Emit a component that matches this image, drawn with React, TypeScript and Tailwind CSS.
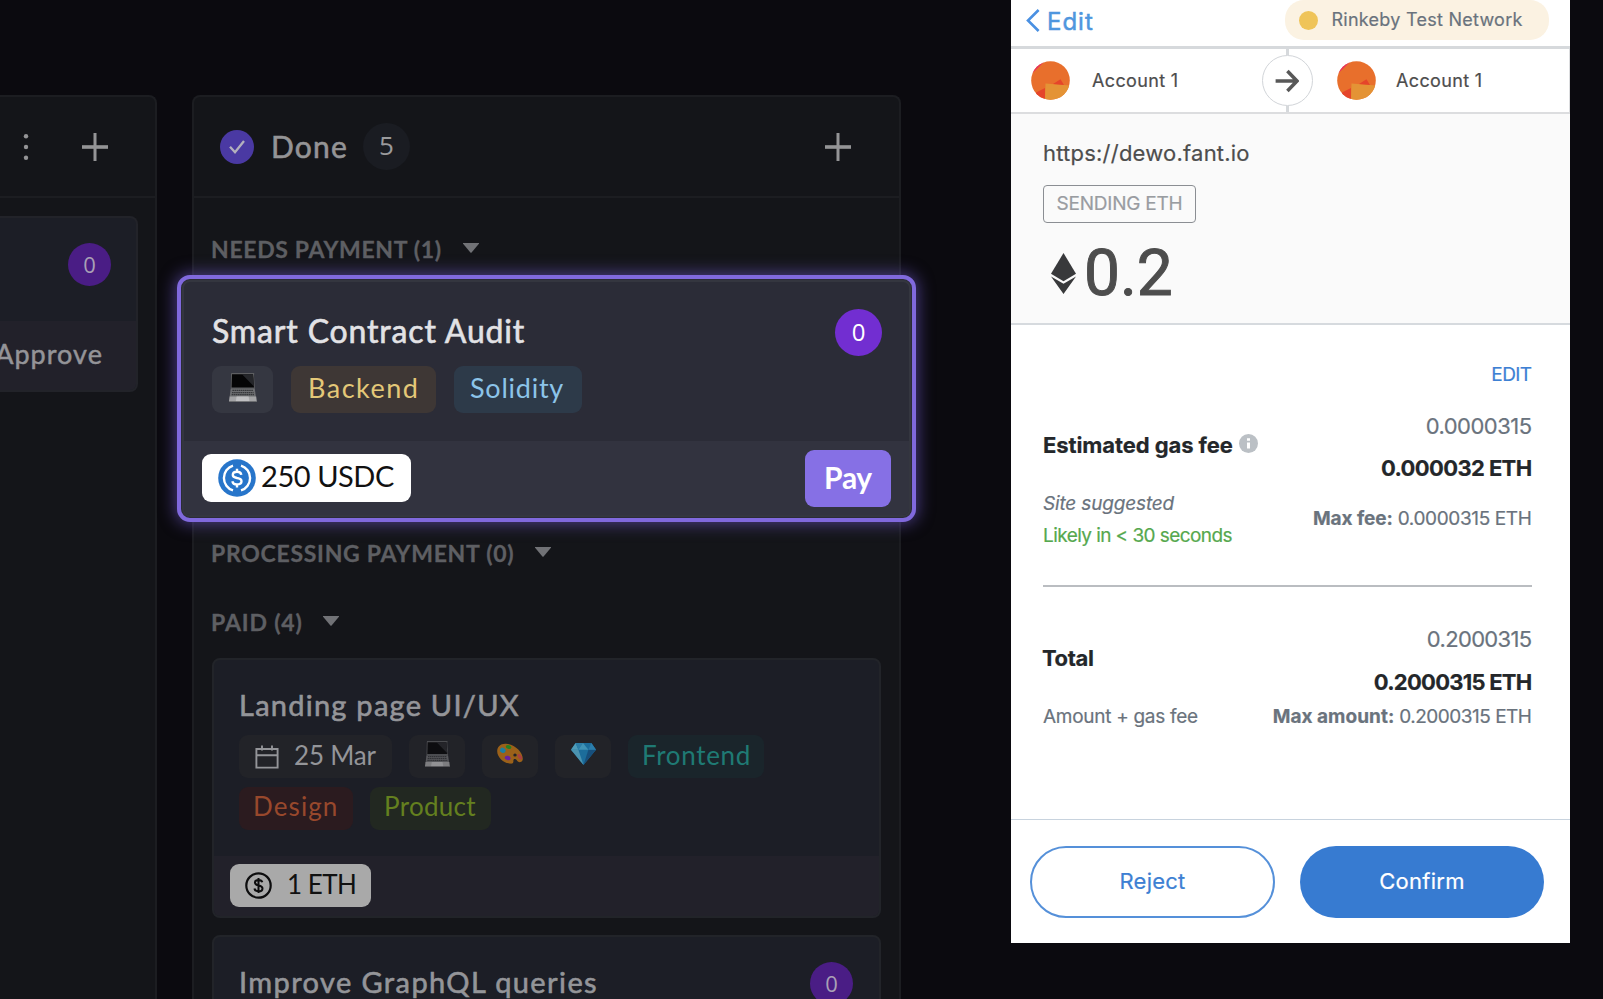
import React from "react";

function Plus() {
  return (
    <svg className="h-[28px] w-[28px] shrink-0" viewBox="0 0 28 28" fill="#949496">
      <rect x="1" y="12.2" width="26" height="3.6" />
      <rect x="12.5" y="0" width="3" height="28" />
    </svg>
  );
}

function Caret() {
  return (
    <svg className="mb-[3px] h-[10px] w-[16px]" viewBox="0 0 16 10" fill="#717276">
      <path d="M.4 0h15.2c.5 0 .6.4.3.8L8.6 9.4a.8.8 0 0 1-1.2 0L.1.8C-.2.4-.1 0 .4 0z" />
    </svg>
  );
}

function Laptop({ className }: { className: string }) {
  return (
    <svg className={className} viewBox="0 0 28 29">
      <path d="M2.3 0h22.6l.6 1-.6.6 1 14.4H1.7L2 1.6z" fill="#5d5e61" />
      <path d="M3 1.2h21l1 13.4H2.6z" fill="#050506" />
      <path d="M13 1.2h11l1 12.4z" fill="#25262a" />
      <path d="M1.6 16h24.2l1.2 8.2H.6z" fill="#6d6e71" />
      <path d="M3.4 17.4h20.8M3 19.6h21.6M2.7 21.6h22.3" stroke="#37383b" strokeWidth="1.2" strokeDasharray="1.6 .5" />
      <path d="M.6 23.4h26.6l.6 4.8H0z" fill="#a4a4a6" />
      <path d="M7.6 23.4h12l.9 4.8H6.8z" fill="#c0c0c2" />
      <path d="M0 28h28v.8H0z" fill="#77787a" />
    </svg>
  );
}

function Palette() {
  return (
    <svg className="h-[22px] w-[26px]" viewBox="0 0 26 22">
      <path
        d="M9 .8C3.5.4.2 4 .2 8.2c0 6 6 11.600 12.600 12.400 2.800.4 3.800-.6 3.600-2.400-.2-1.600.4-2.400 1.800-2.200 1.400.2 2.200 3.200 4.600 3.200 2 0 3-1.600 3-3.400C25.800 9 17.600 1.200 9 .8z"
        fill="#9b6119"
      />
      <ellipse cx="6" cy="7.4" rx="2.9" ry="2.5" fill="#1d7fa0" transform="rotate(30 6 7)" />
      <ellipse cx="11.6" cy="4" rx="2.8" ry="1.9" fill="#257f1f" transform="rotate(20 11.6 4)" />
      <ellipse cx="10.6" cy="14.8" rx="3" ry="2.2" fill="#6a21a0" transform="rotate(15 10 15)" />
      <ellipse cx="22.8" cy="13.8" rx="1.7" ry="3" fill="#a93f40" transform="rotate(-35 22.8 13.8)" />
      <ellipse cx="18" cy="12" rx="1.7" ry="1.5" fill="#222327" />
    </svg>
  );
}

function Diamond() {
  return (
    <svg className="h-[22px] w-[25px]" viewBox="0 0 25 22">
      <path d="M4.6 0h15.8L25 6.8 12.5 22 0 6.8z" fill="#1c6d9b" />
      <path d="M4.6 0 0 6.8h7.4z" fill="#4f9cb8" />
      <path d="M4.6 0 7.4 6.8 12 0z" fill="#2c7ea8" />
      <path d="M12 0 7.4 6.8h10z" fill="#3f93b6" />
      <path d="M0 6.8 12.5 22 7.4 6.8z" fill="#4b93b0" />
      <path d="M17.4 6.8H25L12.5 22z" fill="#174f7c" />
      <path d="M20.4 0 17.4 6.8H25z" fill="#2b7dab" />
    </svg>
  );
}

function Section({ label, className, labelClass }: { label: string; className: string; labelClass: string }) {
  return (
    <div className={"flex h-[30px] items-center pl-[17px] text-[23px] leading-[30px] font-bold text-[#5e5f63] " + className}>
      <span className={"whitespace-nowrap [-webkit-text-stroke:0.3px] " + labelClass}>{label}</span>
      <Caret />
    </div>
  );
}

function CalendarIcon() {
  return (
    <svg className="h-[24px] w-[24px]" viewBox="0 0 24 24" fill="none" stroke="#949599" strokeWidth="1.900">
      <path d="M1.400 4h21.200v18.600H1.400zM1.400 10.200h21.200M7 .4v5M17 .4v5" />
    </svg>
  );
}

function DollarIcon() {
  return (
    <svg className="h-[27px] w-[27px]" viewBox="0 0 27 27" fill="none" stroke="#0d0d0e">
      <circle cx="13.500" cy="13.500" r="12.200" strokeWidth="2.200" />
      <path d="M17.300 10.300c-.4-1.700-1.900-2.400-3.800-2.400-2 0-3.600.9-3.600 2.700 0 1.700 1.300 2.300 3.600 2.800 2.600.5 4 1.200 4 3 0 1.900-1.700 2.900-4 2.900-2.200 0-3.800-1-4.100-2.800M13.500 6v15" strokeWidth="2" />
    </svg>
  );
}

function UsdcIcon() {
  return (
    <svg className="h-[38px] w-[38px]" viewBox="0 0 38 38" fill="none" stroke="#fff" strokeWidth="2.400">
      <circle cx="19" cy="19" r="18.800" fill="#2775ca" stroke="none" />
      <path d="M15 6.600a13 13 0 0 0 0 24.800M23 6.600a13 13 0 0 1 0 24.800" />
      <path d="M23.300 15.900c-.3-2-1.900-3.100-4.300-3.100-2.500 0-4.200 1.200-4.200 3.100 0 2 1.700 2.600 4.200 3.100 2.900.5 4.500 1.200 4.500 3.200 0 2-1.800 3.200-4.500 3.200s-4.300-1.200-4.600-3.200M19 9.800v3M19 25.400v3" />
    </svg>
  );
}

function Avatar() {
  return (
    <svg className="h-[39px] w-[39px] shrink-0" viewBox="0 0 39 39">
      <defs>
        <clipPath id="disc">
          <circle cx="19.500" cy="19.500" r="19.300" />
        </clipPath>
      </defs>
      <g clipPath="url(#disc)">
        <rect width="39" height="39" fill="#e86f2c" />
        <path d="M0 13.500 14 0H0z" fill="#e8305f" />
        <path d="M14.500 22.500 39 24.500V39H14z" fill="#e49335" />
        <path d="m22 23.100 7.500-4.800 3.500 5.700z" fill="#e5452a" />
        <path d="M5 31.500 14 27v12H5z" fill="#e5452a" />
      </g>
    </svg>
  );
}

function Board() {
  return (
    <>
      <section className="flex h-[910px] w-[157px] shrink-0 flex-col rounded-tr-[8px] border-t-2 border-r-2 border-[#1c1d21] bg-[#141519]">
        <header className="flex h-[101px] items-center border-b-2 border-[#1c1d21] pl-[22px]">
          <svg className="mr-[51px] h-[28px] w-[8px]" viewBox="0 0 8 28" fill="#949496">
            <circle cx="4" cy="3.200" r="2.200" />
            <circle cx="4" cy="14" r="2.200" />
            <circle cx="4" cy="24.800" r="2.200" />
          </svg>
          <Plus />
        </header>
        <article className="mt-[18px] mr-[17px] flex h-[176px] flex-col overflow-hidden rounded-r-[8px] border-2 border-l-0 border-[#222329] bg-[#1c1e26]">
          <div className="flex h-[103px] justify-end pt-[25px] pr-[25px]">
            <span className="flex h-[43px] w-[43px] items-center justify-center rounded-full bg-[#4a1d85] pb-[1px] font-['Open_Sans',sans-serif] text-[22px] text-[#a9a0b6]">0</span>
          </div>
          <div className="flex flex-1 justify-end bg-[#22212a] pt-[13px] pr-[33px]">
            <span className="text-[27px] leading-[40px] tracking-[1.050px] text-[#949498] [-webkit-text-stroke:0.5px]">Approve</span>
          </div>
        </article>
      </section>

      <section className="ml-[35px] flex h-[910px] w-[709px] shrink-0 flex-col rounded-t-[8px] border-2 border-b-0 border-[#1c1d21] bg-[#141519]">
        <header className="flex h-[101px] shrink-0 items-center border-b-2 border-[#1c1d21] pr-[47px] pl-[26px]">
          <span className="flex h-[34px] w-[34px] items-center justify-center rounded-full bg-[#4a39a3]">
            <svg className="h-[14px] w-[16px]" viewBox="0 0 16 14" fill="none" stroke="#b3b0bd" strokeWidth="2.300">
              <path d="m1 6.800 5 5.400L15 1" />
            </svg>
          </span>
          <h2 className="ml-[17px] w-[93px] pb-[1px] text-[30px] leading-[40px] tracking-[1.200px] text-[#949496] [-webkit-text-stroke:0.6px]">Done</h2>
          <span className="-ml-[1px] flex h-[47px] w-[47px] items-center justify-center rounded-full bg-[#1a1c22] pb-[2px] font-['Open_Sans',sans-serif] text-[26px] text-[#9a9a9c]">5</span>
          <span className="ml-auto">
            <Plus />
          </span>
        </header>

        <Section label="NEEDS PAYMENT (1)" className="mt-[36px]" labelClass="w-[252px] tracking-[0.660px]" />

        <article className="z-10 -mx-[17px] mt-[11px] flex h-[247px] shrink-0 flex-col rounded-[13px] border-4 border-[#8069dd] bg-[#2b2c37] p-[1px] shadow-[0_0_16px_2px_rgba(110,88,200,0.6)]">
          <div className="flex flex-1 flex-col overflow-hidden rounded-[8px] border-2 border-[#34363f]">
            <div className="flex h-[159px] pr-[27px] pl-[28px]">
              <div className="pt-[29px]">
                <h3 className="text-[32px] leading-[40px] tracking-[0.850px] whitespace-nowrap text-[#e2e2e5] [-webkit-text-stroke:0.6px]">Smart Contract Audit</h3>
                <div className="mt-[15px] flex gap-[18px] text-[27px] leading-[44px]">
                  <span className="flex h-[47px] w-[61px] items-center justify-center rounded-[9px] bg-[#353741]">
                    <Laptop className="mb-[5px] h-[29px] w-[28px]" />
                  </span>
                  <span className="h-[47px] w-[145px] rounded-[9px] bg-[#3e3735] pl-[17px] tracking-[1.500px] text-[#e4c878]">Backend</span>
                  <span className="h-[47px] w-[128px] rounded-[9px] bg-[#2d3a49] pl-[16px] tracking-[0.760px] text-[#8cc4e9]">Solidity</span>
                </div>
              </div>
              <span className="mt-[27px] ml-auto flex h-[47px] w-[47px] items-center justify-center rounded-full bg-[#722ed1] pb-[2px] font-['Open_Sans',sans-serif] text-[24px] text-white">0</span>
            </div>
            <div className="flex flex-1 bg-[#32333f] pr-[18px] pl-[18px]">
              <div className="mt-[13px] flex h-[48px] w-[209px] items-center rounded-[9px] bg-white pl-[16px] text-[29px] leading-[44px] text-[#111]">
                <UsdcIcon />
                <span className="ml-[5px] pb-[4px] tracking-[-0.430px]">250 USDC</span>
              </div>
              <button className="mt-[9px] ml-auto h-[57px] w-[86px] rounded-[9px] bg-[#8670e5] pb-[2px] text-[30px] leading-[55px] font-bold tracking-[-0.300px] text-white">Pay</button>
            </div>
          </div>
        </article>

        <Section label="PROCESSING PAYMENT (0)" className="mt-[16px]" labelClass="w-[324px] tracking-[0.720px]" />
        <Section label="PAID (4)" className="mt-[39px]" labelClass="w-[112px] tracking-[0.840px]" />

        <article className="mx-[18px] mt-[21px] flex h-[260px] shrink-0 flex-col overflow-hidden rounded-[8px] border-2 border-[#222429] bg-[#1c1e26]">
          <div className="h-[196px] pt-[25px] pl-[25px] text-[26px]">
            <h3 className="text-[29px] leading-[40px] tracking-[1.250px] text-[#949599] [-webkit-text-stroke:0.6px]">Landing page UI/UX</h3>
            <div className="mt-[10px] flex h-[43px] gap-[17px] leading-[40px]">
              <span className="flex w-[153px] items-center rounded-[9px] bg-[#222328] pl-[16px] text-[#949599]">
                <CalendarIcon />
                <span className="ml-[15px] pb-[3px] tracking-[-0.180px]">25 Mar</span>
              </span>
              <span className="flex w-[56px] items-center justify-center rounded-[9px] bg-[#222328]">
                <Laptop className="mb-[5px] h-[26px] w-[25px] opacity-70" />
              </span>
              <span className="flex w-[56px] items-center justify-center rounded-[9px] bg-[#222328] pb-[5px]">
                <Palette />
              </span>
              <span className="flex w-[56px] items-center justify-center rounded-[9px] bg-[#222328] pb-[5px]">
                <Diamond />
              </span>
              <span className="w-[136px] rounded-[9px] bg-[#1a252b] pl-[14px] tracking-[0.660px] text-[#1f7a74]">Frontend</span>
            </div>
            <div className="mt-[9px] flex h-[43px] gap-[17px] leading-[39px]">
              <span className="w-[114px] rounded-[9px] bg-[#2b1b1f] pl-[14px] tracking-[1.100px] text-[#98482c]">Design</span>
              <span className="w-[121px] rounded-[9px] bg-[#222821] pl-[14px] tracking-[0.300px] text-[#64801f]">Product</span>
            </div>
          </div>
          <div className="flex-1 bg-[#22212a] pt-[8px] pl-[16px]">
            <div className="flex h-[43px] w-[141px] items-center rounded-[9px] bg-[#a9a9a9] pl-[15px] text-[26px] leading-[40px] text-[#111]">
              <DollarIcon />
              <span className="ml-[15px] pb-[3px] tracking-[-0.500px]">1 ETH</span>
            </div>
          </div>
        </article>

        <article className="mx-[18px] mt-[17px] flex h-[120px] shrink-0 rounded-[8px] border-2 border-[#222429] bg-[#1c1e26] pt-[25px] pr-[26px] pl-[25px]">
          <h3 className="text-[29px] leading-[40px] tracking-[1.400px] whitespace-nowrap text-[#949599] [-webkit-text-stroke:0.6px]">Improve GraphQL queries</h3>
          <span className="ml-auto flex h-[43px] w-[43px] items-center justify-center rounded-full bg-[#4a1d85] pb-[1px] font-['Open_Sans',sans-serif] text-[22px] text-[#a9a0b6]">0</span>
        </article>
      </section>
    </>
  );
}

function Wallet() {
  return (
    <aside className="-mt-[95px] ml-[110px] flex h-[943px] w-[558.500px] shrink-0 flex-col bg-white font-['Inter',sans-serif] whitespace-nowrap [-webkit-text-stroke:0.2px]">
      <header className="flex h-[49px] shrink-0 border-b-3 border-[#d6d9dc]">
        <svg className="mt-[9px] ml-[15px] h-[23px] w-[14px]" viewBox="0 0 14 23" fill="none" stroke="#4a90e2" strokeWidth="2.600">
          <path d="M12.600 1 2 11.500 12.600 22" />
        </svg>
        <span className="ml-[7px] text-[24px] leading-[43px] tracking-[1px] text-[#4f96de] [-webkit-text-stroke:0.5px]">Edit</span>
        <span className="mr-[21px] ml-auto flex h-[40px] w-[264px] items-center rounded-[19px] bg-[#fbf2e2] pl-[14px] text-[18px] leading-[40px] tracking-[0.260px] text-[#6a737d]">
          <i className="mr-[14px] h-[19px] w-[19px] rounded-full bg-[#efc459]" />
          Rinkeby Test Network
        </span>
      </header>

      <div className="flex h-[65px] shrink-0 items-center border-r border-b-2 border-[#dcdddf] pl-[20px] text-[18px] tracking-[0.350px] text-[#4d4d4d]">
        <Avatar />
        <span className="ml-[22px] w-[170px]">Account 1</span>
        <div className="flex h-full w-[50px] flex-col items-center">
          <i className="w-[3px] flex-1 bg-[#d6d9dc]" />
          <span className="flex h-[51px] w-[51px] items-center justify-center rounded-full border border-[#d2d5d9]">
            <svg className="h-[24px] w-[24px]" viewBox="0 0 24 24" fill="none" stroke="#585858" strokeWidth="3.500">
              <path d="M.6 12h21M12.400 2 22 12l-9.600 10" />
            </svg>
          </span>
          <i className="w-[3px] flex-1 bg-[#d6d9dc]" />
        </div>
        <span className="ml-[25px] flex">
          <Avatar />
        </span>
        <span className="ml-[20px]">Account 1</span>
      </div>

      <div className="h-[211px] shrink-0 border-b-2 border-[#d6dade] bg-[#fafafa] pt-[25px] pl-[32px] text-[#4d4d4d]">
        <p className="text-[22px] leading-[28px] tracking-[0.220px]">https://dewo.fant.io</p>
        <span className="mt-[18px] flex h-[38px] w-[153px] items-center justify-center rounded-[4px] border-[1.500px] border-[#8b8e93] text-[19px] tracking-[-0.230px] text-[#999ca1]">SENDING ETH</span>
        <div className="mt-[18px] flex pl-[8px]">
          <svg className="mt-[12px] h-[41px] w-[25px]" viewBox="0 0 25 41" fill="#38393b">
            <path d="M12.500 0 25 20.800 12.500 28.200 0 20.800z" />
            <path d="M0 23.400 12.500 30.800 25 23.400 12.500 41z" />
          </svg>
          <span className="ml-[8px] font-['Roboto',sans-serif] text-[64px] leading-[66px] [-webkit-text-stroke:1px]">0.2</span>
        </div>
      </div>

      <div className="mr-[38px] ml-[32px] flex h-[262px] shrink-0 justify-between border-b-2 border-[#babdc1] text-[19px] leading-[24px] text-[#6a737d]">
        <div className="pt-[106px]">
          <p className="flex text-[22px] leading-[28px] font-bold tracking-[-0.090px] text-[#24272a]">
            <span>Estimated gas fee</span>
            <svg className="mt-[3px] ml-[6px] h-[19px] w-[19px]" viewBox="0 0 19 19">
              <circle cx="9.500" cy="9.500" r="9.500" fill="#bbc0c5" />
              <path d="M8 8.400h3v6H8zM8 4.200h3v2.600H8z" fill="#fff" />
            </svg>
          </p>
          <p className="mt-[33px] tracking-[-0.160px] italic">Site suggested</p>
          <p className="mt-[8px] tracking-[-0.570px] text-[#56a84e]">Likely in &lt; 30 seconds</p>
        </div>
        <div className="pt-[38px] text-right">
          <p className="tracking-[-0.580px] text-[#3d80d3]">EDIT</p>
          <p className="mt-[25px] text-[22px] leading-[28px] tracking-[-0.520px]">0.0000315</p>
          <p className="mt-[14px] text-[22px] leading-[28px] font-bold tracking-[-0.620px] text-[#24272a]">0.000032 ETH</p>
          <p className="mt-[25px] tracking-[-0.370px]">
            <b className="tracking-[-0.080px]">Max fee:</b> 0.0000315 ETH
          </p>
        </div>
      </div>

      <div className="mr-[38px] ml-[32px] flex h-[232px] shrink-0 justify-between text-[19px] leading-[24px] text-[#6a737d]">
        <div className="pt-[57px]">
          <p className="-ml-[1px] text-[22px] leading-[28px] font-bold tracking-[-0.350px] text-[#24272a]">Total</p>
          <p className="mt-[33px] tracking-[-0.290px]">Amount + gas fee</p>
        </div>
        <div className="pt-[38px] text-right">
          <p className="text-[22px] leading-[28px] tracking-[-0.660px]">0.2000315</p>
          <p className="mt-[15px] text-[22px] leading-[28px] font-bold tracking-[-0.740px] text-[#24272a]">0.2000315 ETH</p>
          <p className="mt-[9px] tracking-[-0.490px]">
            <b className="tracking-[0.040px]">Max amount:</b> 0.2000315 ETH
          </p>
        </div>
      </div>

      <footer className="flex flex-1 gap-[25px] border-t border-[#c8d3de] pt-[26px] pl-[19px] text-[22px]">
        <button className="h-[72px] w-[245px] rounded-full border-2 border-[#5590d9] pb-[1px] tracking-[0.240px] text-[#3d80d3]">Reject</button>
        <button className="h-[72px] w-[244px] rounded-full bg-[#377bd1] pb-[1px] tracking-[0.270px] text-white">Confirm</button>
      </footer>
    </aside>
  );
}

export default function App() {
  return (
    <main className="flex h-[999px] w-[1603px] items-start overflow-hidden bg-[#0b0a0f] pt-[95px] font-['Lato',sans-serif]">
      <Board />
      <Wallet />
    </main>
  );
}
